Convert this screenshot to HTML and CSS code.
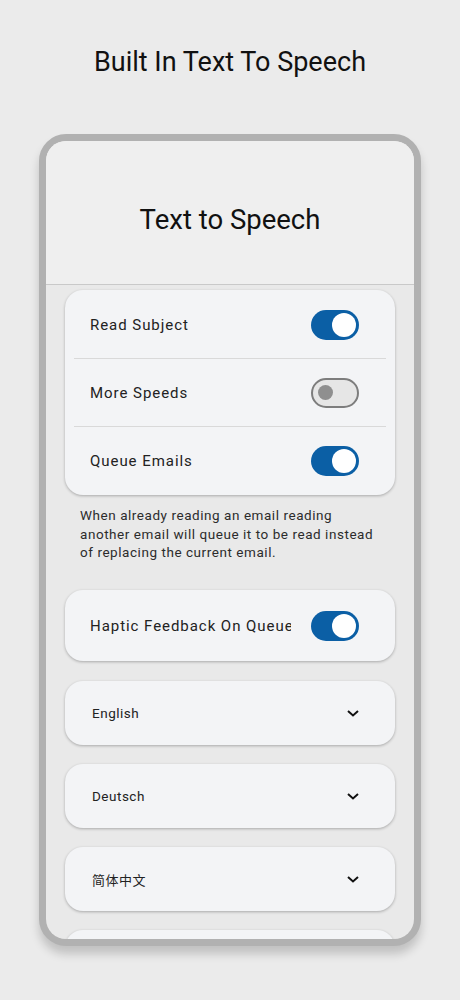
FILE: index.html
```html
<!DOCTYPE html>
<html>
<head>
<meta charset="utf-8">
<link rel="stylesheet" href="styles.css">
</head>
<body>
<h1 class="page-title">Built In Text To Speech</h1>
<div class="phone">
  <div class="screen">
    <header class="app-header">
      <h2 class="app-title">Text to Speech</h2>
    </header>
    <main class="content">
      <section class="card group">
        <div class="row">
          <span class="label">Read Subject</span>
          <span class="toggle on"><span class="thumb"></span></span>
        </div>
        <div class="divider"></div>
        <div class="row">
          <span class="label">More Speeds</span>
          <span class="toggle off"><span class="thumb"></span></span>
        </div>
        <div class="divider"></div>
        <div class="row">
          <span class="label">Queue Emails</span>
          <span class="toggle on"><span class="thumb"></span></span>
        </div>
      </section>
      <p class="note">When already reading an email reading another email will queue it to be read instead of replacing the current email.</p>
      <section class="card single">
        <div class="row tall">
          <span class="label clip">Haptic Feedback On Queue</span>
          <span class="toggle on"><span class="thumb"></span></span>
        </div>
      </section>
      <section class="card select">
        <span class="sel-label">English</span>
        <svg class="chev" viewBox="0 0 12 7" width="12" height="7"><polyline points="1,1 6,5.5 11,1" fill="none" stroke="#111" stroke-width="2"/></svg>
      </section>
      <section class="card select">
        <span class="sel-label">Deutsch</span>
        <svg class="chev" viewBox="0 0 12 7" width="12" height="7"><polyline points="1,1 6,5.5 11,1" fill="none" stroke="#111" stroke-width="2"/></svg>
      </section>
      <section class="card select">
        <span class="sel-label cjk">简体中文</span>
        <svg class="chev" viewBox="0 0 12 7" width="12" height="7"><polyline points="1,1 6,5.5 11,1" fill="none" stroke="#111" stroke-width="2"/></svg>
      </section>
      <section class="card select"></section>
    </main>
  </div>
</div>
</body>
</html>
```
FILE: styles.css
```css
* { box-sizing: border-box; }
html, body {
  margin: 0;
  padding: 0;
}
body {
  width: 460px;
  height: 1000px;
  overflow: hidden;
  background: #ebebeb;
  font-family: Roboto, "Noto Sans", "Noto Sans CJK SC", sans-serif;
  color: #1a1a1a;
}
.page-title {
  margin: 0;
  padding-top: 44px;
  height: 134px;
  text-align: center;
  font-size: 27px;
  line-height: 36px;
  font-weight: 400;
  color: #111;
}
.phone {
  margin-left: 39px;
  width: 382px;
  height: 812px;
  border: 7px solid #b1b1b1;
  border-radius: 27px;
  background: #b1b1b1;
  box-shadow: 0 8px 10px rgba(0,0,0,0.18);
}
.screen {
  height: 100%;
  border-radius: 20px;
  overflow: hidden;
  background: #e9e9e9;
}
.app-header {
  height: 144px;
  background: #efefef;
  border-bottom: 1px solid #c9c9c9;
  display: flex;
  justify-content: center;
  padding-top: 60px;
}
.app-title {
  margin: 0;
  font-size: 27.5px;
  line-height: 38px;
  font-weight: 400;
  color: #111;
}
.content {
  padding: 5px 19px 0;
}
.card {
  background: #f3f4f6;
  border-radius: 18px;
  box-shadow: 0 1px 3px rgba(0,0,0,0.28);
}
.group {
  padding: 1px 9px;
}
.row {
  height: 67px;
  display: flex;
  align-items: center;
  padding: 0 27px 0 16px;
  gap: 20px;
}
.divider {
  height: 1px;
  background: #d9d9d9;
}
.label {
  flex: 1;
  font-size: 15px;
  letter-spacing: 0.95px;
  color: #222;
  white-space: nowrap;
}
.clip { overflow: hidden; }
.toggle {
  flex: none;
  width: 48px;
  height: 30px;
  border-radius: 15px;
  display: flex;
  align-items: center;
}
.toggle.on {
  background: #0b5fa5;
  justify-content: flex-end;
  padding-right: 3px;
}
.toggle.on .thumb {
  width: 24px;
  height: 24px;
  border-radius: 50%;
  background: #fff;
}
.toggle.off {
  background: #e6e6e6;
  border: 2px solid #7d7d7d;
  padding-left: 5px;
}
.toggle.off .thumb {
  width: 15px;
  height: 15px;
  border-radius: 50%;
  background: #8f8f8f;
}
.note {
  margin: 0;
  padding: 11px 0 0 15px;
  width: 312px;
  height: 95px;
  font-size: 13.5px;
  line-height: 18.5px;
  letter-spacing: 0.55px;
  color: #2c2c2c;
}
.single {
  height: 71px;
  padding: 0 9px;
  margin-bottom: 20px;
}
.single .row { height: 71px; }
.select {
  height: 64px;
  display: flex;
  align-items: center;
  justify-content: space-between;
  padding: 0 36px 0 27px;
  margin-bottom: 19px;
}
.sel-label {
  font-size: 13.5px;
  letter-spacing: 0.5px;
  color: #222;
}
.cjk { font-family: "Noto Sans CJK SC", sans-serif; font-size: 13px; }
.chev { display: block; }
```
